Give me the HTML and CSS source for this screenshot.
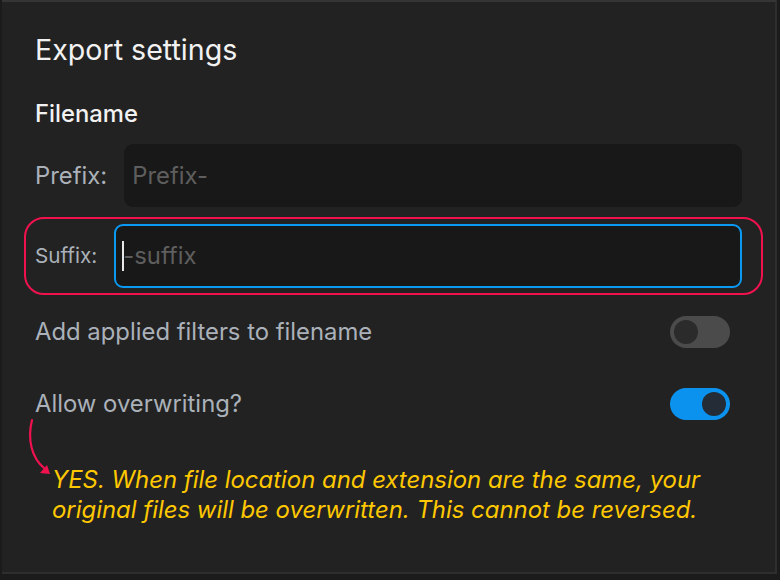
FILE: index.html
```html
<!DOCTYPE html>
<html lang="en">
<head>
<meta charset="utf-8">
<title>Export settings</title>
<link rel="stylesheet" href="styles.css">
</head>
<body>
<div class="panel">
  <h1 class="title">Export settings</h1>
  <h2 class="section">Filename</h2>
  <div class="field-row">
    <span class="label">Prefix:</span>
    <div class="input"><span class="placeholder">Prefix-</span></div>
  </div>
  <div class="field-row highlight">
    <span class="label small">Suffix:</span>
    <div class="input focused"><span class="caret"></span><span class="placeholder">-suffix</span></div>
  </div>
  <div class="toggle-row first">
    <span class="label">Add applied filters to filename</span>
    <span class="toggle"><span class="knob"></span></span>
  </div>
  <div class="toggle-row">
    <span class="label">Allow overwriting?</span>
    <span class="toggle on"><span class="knob"></span></span>
  </div>
  <p class="warning">YES. When file location and extension are the same, your original files will be overwritten. This cannot be reversed.</p>
  <svg class="arrow" width="30" height="64" viewBox="0 0 30 64">
    <path d="M10 2 C 5 22, 10 40, 22 50" fill="none" stroke="#f0124f" stroke-width="2.2" stroke-linecap="round"/>
    <polygon points="28,56 18,55 25,47" fill="#f0124f"/>
  </svg>
</div>
</body>
</html>
```
FILE: styles.css
```css
* { box-sizing: border-box; }
html, body { margin: 0; padding: 0; }
body {
  background: #1b1b1b;
  width: 780px;
  height: 580px;
  overflow: hidden;
  font-family: Inter, "Noto Sans", "Liberation Sans", sans-serif;
}
.panel {
  position: relative;
  margin-left: 2px;
  width: 775px;
  height: 574px;
  background: #222222;
  border-top: 2px solid #353535;
  border-right: 2px solid #2e2e2e;
  border-bottom: 2px solid #2e2e2e;
  padding: 30px 33px 0 33px;
}
.title {
  margin: 0;
  font-size: 28.6px;
  line-height: 36px;
  font-weight: 400;
  color: #f2f2f2;
}
.section {
  margin: 31px 0 0;
  font-size: 23.8px;
  line-height: 30px;
  font-weight: 500;
  color: #f2f2f2;
}
.label {
  font-size: 23.85px;
  line-height: 30px;
  color: #aab1b9;
  white-space: nowrap;
}
.label.small { font-size: 20.7px; }
.field-row {
  display: flex;
  align-items: center;
  gap: 17px;
  margin-top: 15px;
}
.input {
  flex: 1;
  height: 63px;
  background: #181818;
  border-radius: 9px;
  display: flex;
  align-items: center;
  padding-left: 8px;
  font-size: 23.85px;
  line-height: 30px;
}
.placeholder { color: #5e5e5e; }
.field-row.highlight {
  margin: 10px -21px 0 -11px;
  padding: 5px 19px 5px 9px;
  border: 2px solid #f0124f;
  border-radius: 20px;
}
.input.focused {
  height: 64px;
  border: 2px solid #0a9af2;
  padding-left: 6px;
}
.caret {
  display: inline-block;
  width: 2px;
  height: 30px;
  background: #e8e8e8;
  margin-right: -1px;
  position: relative;
  z-index: 1;
}
.toggle-row {
  display: flex;
  align-items: center;
  justify-content: space-between;
  height: 32px;
  margin-top: 40px;
  padding-right: 12px;
}
.toggle-row.first { margin-top: 21px; }
.toggle {
  width: 60px;
  height: 32px;
  border-radius: 16px;
  background: #4b4b4b;
  display: flex;
  align-items: center;
  padding: 0 4px;
  flex-shrink: 0;
}
.toggle .knob {
  width: 24px;
  height: 24px;
  border-radius: 50%;
  background: #2b2b2b;
}
.toggle.on {
  background: #0b92ee;
  justify-content: flex-end;
}
.toggle.on .knob { background: #232c37; }
.warning {
  margin: 45px 0 0;
  padding-left: 17px;
  font-size: 23.9px;
  line-height: 30px;
  font-style: italic;
  color: #ffc800;
}
.arrow {
  position: absolute;
  left: 20px;
  top: 416px;
}
```
